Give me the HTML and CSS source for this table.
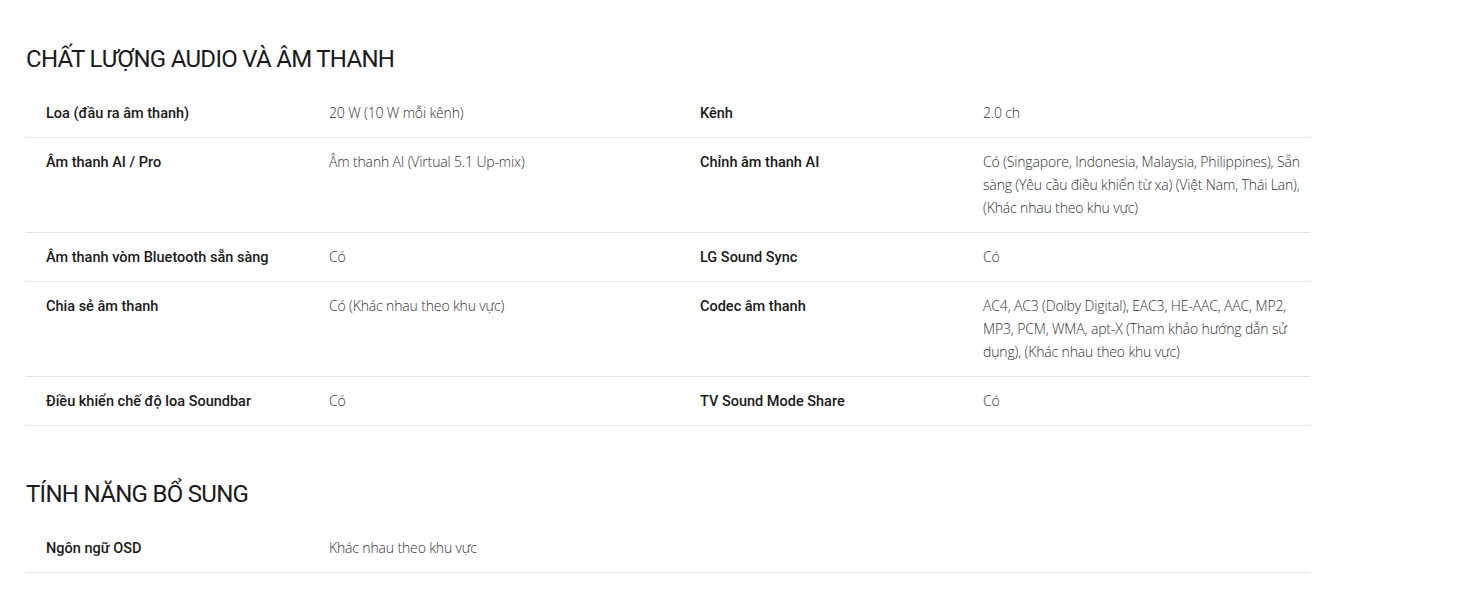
FILE: index.html
```html
<!DOCTYPE html>
<html lang="vi">
<head>
<meta charset="utf-8">
<link rel="stylesheet" href="styles.css">
</head>
<body>
<main class="specs">
  <section class="group">
    <h2 class="group-title">CHẤT LƯỢNG AUDIO VÀ ÂM THANH</h2>
    <div class="spec-table">
      <div class="row">
        <div class="label">Loa (đầu ra âm thanh)</div>
        <div class="value">20 W (10 W mỗi kênh)</div>
        <div class="label">Kênh</div>
        <div class="value">2.0 ch</div>
      </div>
      <div class="row">
        <div class="label">Âm thanh AI / Pro</div>
        <div class="value">Âm thanh AI (Virtual 5.1 Up-mix)</div>
        <div class="label">Chỉnh âm thanh AI</div>
        <div class="value">Có (Singapore, Indonesia, Malaysia, Philippines), Sẵn sàng (Yêu cầu điều khiển từ xa) (Việt Nam, Thái Lan), (Khác nhau theo khu vực)</div>
      </div>
      <div class="row">
        <div class="label">Âm thanh vòm Bluetooth sẵn sàng</div>
        <div class="value">Có</div>
        <div class="label">LG Sound Sync</div>
        <div class="value">Có</div>
      </div>
      <div class="row">
        <div class="label">Chia sẻ âm thanh</div>
        <div class="value">Có (Khác nhau theo khu vực)</div>
        <div class="label">Codec âm thanh</div>
        <div class="value">AC4, AC3 (Dolby Digital), EAC3, HE-AAC, AAC, MP2, MP3, PCM, WMA, apt-X (Tham khảo hướng dẫn sử dụng), (Khác nhau theo khu vực)</div>
      </div>
      <div class="row">
        <div class="label">Điều khiển chế độ loa Soundbar</div>
        <div class="value">Có</div>
        <div class="label">TV Sound Mode Share</div>
        <div class="value">Có</div>
      </div>
    </div>
  </section>
  <section class="group">
    <h2 class="group-title">TÍNH NĂNG BỔ SUNG</h2>
    <div class="spec-table">
      <div class="row">
        <div class="label">Ngôn ngữ OSD</div>
        <div class="value">Khác nhau theo khu vực</div>
        <div class="label"></div>
        <div class="value"></div>
      </div>
    </div>
  </section>
</main>
</body>
</html>
```
FILE: styles.css
```css
* { box-sizing: border-box; }
html, body { margin: 0; padding: 0; background: #fff; }
body {
  font-family: "Open Sans", "Noto Sans", "Liberation Sans", sans-serif;
  color: #222;
}
.specs {
  width: 1284px;
  margin-left: 26px;
  padding-top: 43px;
}
.group + .group { margin-top: 52px; }
.group-title {
  margin: 0 0 14px;
  font-family: Roboto, "Open Sans", sans-serif;
  font-size: 24px;
  line-height: 32px;
  font-weight: 400;
  letter-spacing: -0.7px;
  color: #1a1a1a;
}
.row {
  display: grid;
  grid-template-columns: 303px 351px 303px 1fr;
  border-bottom: 1px solid #e4e4e4;
}
.label, .value {
  font-size: 14px;
  line-height: 23px;
  padding: 13px 0 12px;
}
.label {
  padding-left: 20px;
  padding-right: 16px;
  font-family: Roboto, "Open Sans", sans-serif;
  font-size: 14.5px;
  font-weight: 500;
  color: #1a1a1a;
}
.value {
  padding: 12px 0 13px;
  font-weight: 300;
  color: #333;
  letter-spacing: -0.15px;
}
```
